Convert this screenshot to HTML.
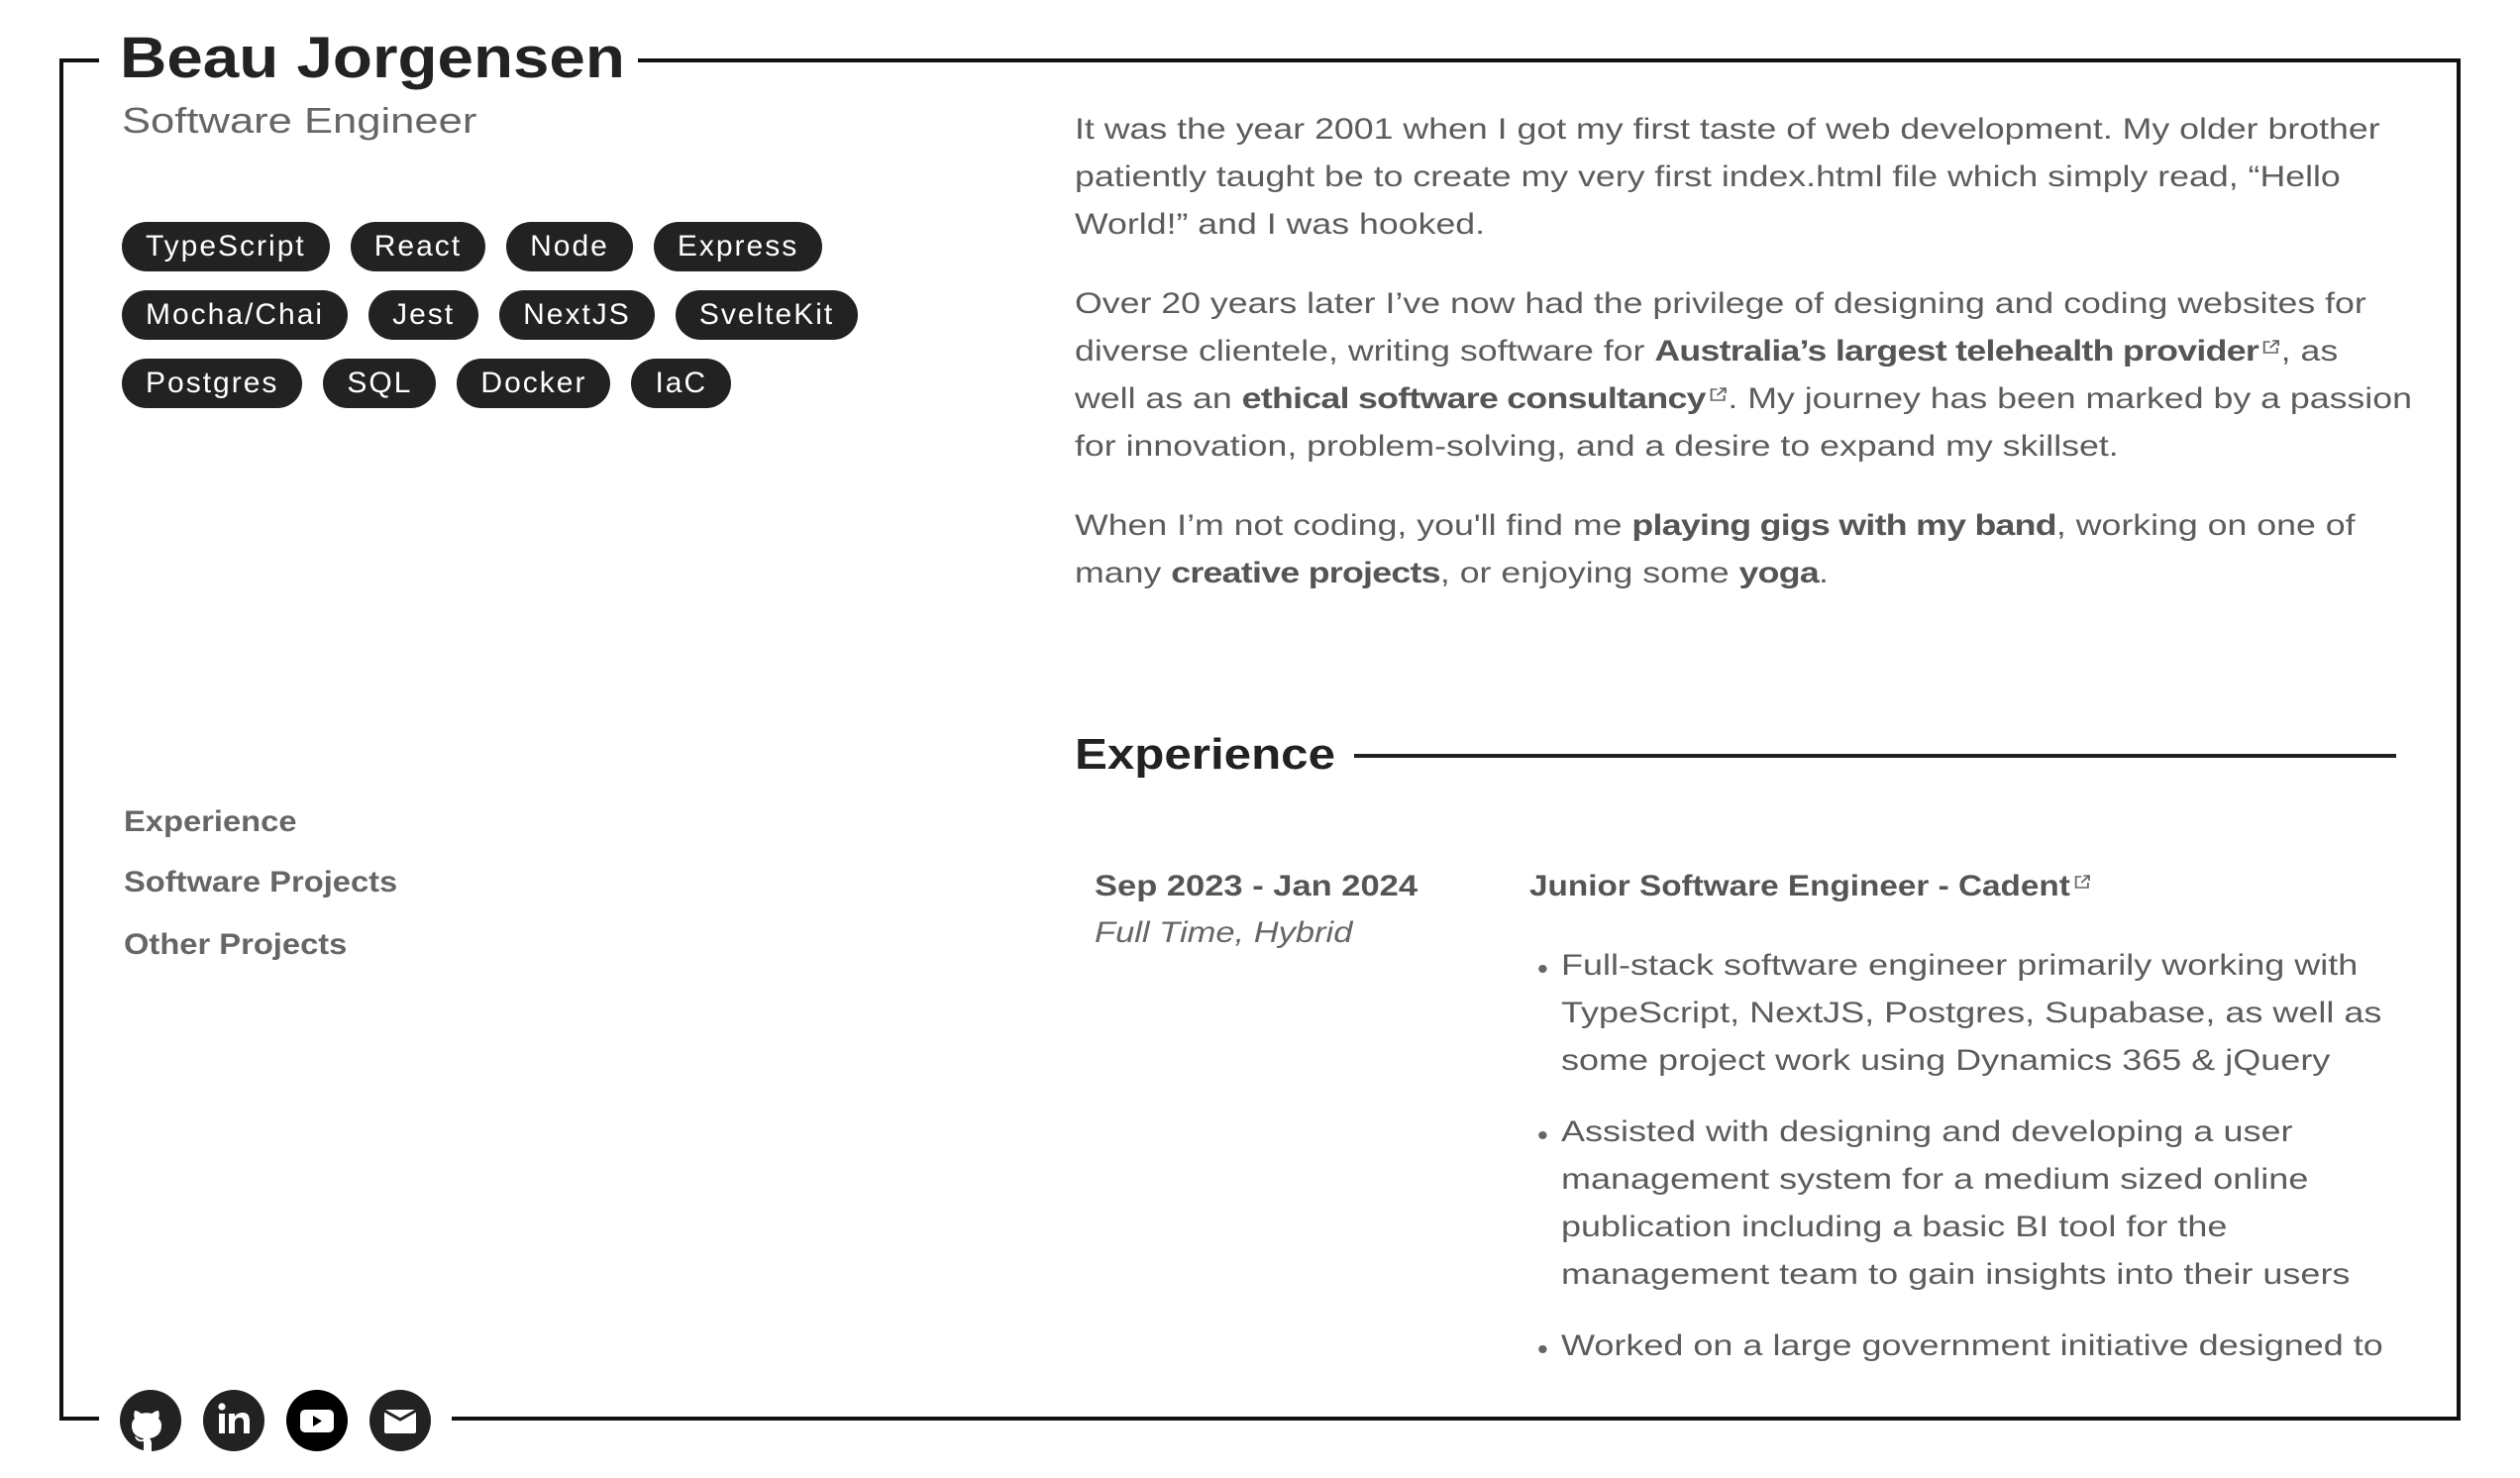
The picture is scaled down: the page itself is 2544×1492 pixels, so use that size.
<!DOCTYPE html>
<html><head><meta charset="utf-8"><style>
*{margin:0;padding:0;box-sizing:border-box}
body{width:2544px;height:1492px;background:#fff;position:relative;overflow:hidden;font-family:"Liberation Sans",sans-serif;color:#5c5c5c}
.ln{position:absolute;background:#111}
.abs{position:absolute;white-space:nowrap;transform-origin:0 0}
.tag{display:inline-block;height:50px;line-height:50px;padding:0 24px;border-radius:25px;background:#222;color:#fff;font-size:30px;margin-right:21px;letter-spacing:2px}
.row{position:absolute;left:123px;white-space:nowrap}
.p{position:absolute;left:1085px;font-size:30px;line-height:48px;white-space:nowrap;color:#5c5c5c;transform:scaleX(1.19);transform-origin:0 0}
b{color:#555;letter-spacing:-0.6px}
.ext{display:inline-block;width:16px;height:16px;vertical-align:6px;margin-left:3px}
.nav{position:absolute;left:125px;font-size:30px;line-height:30px;font-weight:bold;color:#666;transform:scaleX(1.09);transform-origin:0 0;white-space:nowrap}
.bl{position:absolute;left:1576px;font-size:30px;line-height:48px;white-space:nowrap;transform:scaleX(1.2);transform-origin:0 0}
.bl:before{content:"";position:absolute;left:-19px;top:23px;width:7px;height:8px;border-radius:50%;background:#666}
.ic{position:absolute;top:1403px;width:62px;height:62px}
</style></head><body>
<div class="ln" style="left:60px;top:59px;width:40px;height:4px"></div>
<div class="ln" style="left:644px;top:59px;width:1840px;height:4px"></div>
<div class="ln" style="left:60px;top:59px;width:4px;height:1375px"></div>
<div class="ln" style="left:2480px;top:59px;width:4px;height:1375px"></div>
<div class="ln" style="left:60px;top:1430px;width:40px;height:4px"></div>
<div class="ln" style="left:456px;top:1430px;width:2028px;height:4px"></div>

<div class="abs" style="left:121px;top:30px;font-size:58px;line-height:58px;font-weight:bold;color:#222;transform:scaleX(1.13)">Beau Jorgensen</div>
<div class="abs" style="left:123px;top:104px;font-size:36px;line-height:36px;color:#666;transform:scaleX(1.21)">Software Engineer</div>

<div class="row" style="top:224px"><span class="tag">TypeScript</span><span class="tag">React</span><span class="tag">Node</span><span class="tag">Express</span></div>
<div class="row" style="top:293px"><span class="tag">Mocha/Chai</span><span class="tag">Jest</span><span class="tag">NextJS</span><span class="tag">SvelteKit</span></div>
<div class="row" style="top:362px"><span class="tag">Postgres</span><span class="tag">SQL</span><span class="tag">Docker</span><span class="tag">IaC</span></div>

<div class="nav" style="top:815px">Experience</div>
<div class="nav" style="top:876px">Software Projects</div>
<div class="nav" style="top:939px">Other Projects</div>

<div class="p" style="top:107px">It was the year 2001 when I got my first taste of web development. My older brother<br>patiently taught be to create my very first index.html file which simply read, “Hello<br>World!” and I was hooked.</div>
<div class="p" style="top:283px">Over 20 years later I’ve now had the privilege of designing and coding websites for<br>diverse clientele, writing software for <b>Australia’s largest telehealth provider</b><svg class="ext" viewBox="0 0 16 16"><path d="M7 3H2v11h11V9M9 2h5v5M14 2L7 9" fill="none" stroke="#666" stroke-width="1.6"/></svg>, as<br>well as an <b>ethical software consultancy</b><svg class="ext" viewBox="0 0 16 16"><path d="M7 3H2v11h11V9M9 2h5v5M14 2L7 9" fill="none" stroke="#666" stroke-width="1.6"/></svg>. My journey has been marked by a passion<br>for innovation, problem-solving, and a desire to expand my skillset.</div>
<div class="p" style="top:507px">When I’m not coding, you'll find me <b>playing gigs with my band</b>, working on one of<br>many <b>creative projects</b>, or enjoying some <b>yoga</b>.</div>

<div class="abs" style="left:1085px;top:740px;font-size:44px;line-height:44px;font-weight:bold;color:#222;transform:scaleX(1.12)">Experience</div>
<div class="ln" style="left:1367px;top:761px;width:1052px;height:4px;background:#222"></div>

<div class="abs" style="left:1105px;top:871px;font-size:30px;line-height:48px;font-weight:bold;color:#555;transform:scaleX(1.15)">Sep 2023 - Jan 2024</div>
<div class="abs" style="left:1105px;top:918px;font-size:30px;line-height:48px;font-style:italic;color:#666;transform:scaleX(1.15)">Full Time, Hybrid</div>
<div class="abs" style="left:1544px;top:871px;font-size:30px;line-height:48px;font-weight:bold;color:#555;transform:scaleX(1.11)">Junior Software Engineer - Cadent<svg class="ext" viewBox="0 0 16 16"><path d="M7 3H2v11h11V9M9 2h5v5M14 2L7 9" fill="none" stroke="#666" stroke-width="1.6"/></svg></div>

<div class="bl" style="top:951px">Full-stack software engineer primarily working with<br>TypeScript, NextJS, Postgres, Supabase, as well as<br>some project work using Dynamics 365 &amp; jQuery</div>
<div class="bl" style="top:1119px">Assisted with designing and developing a user<br>management system for a medium sized online<br>publication including a basic BI tool for the<br>management team to gain insights into their users</div>
<div class="bl" style="top:1335px">Worked on a large government initiative designed to</div>

<svg class="ic" style="left:121px" viewBox="0 0 62 62"><circle cx="31" cy="31" r="31" fill="#222"/><path d="M24 62V52c-6 1-8-2-9-5 2 0 3 2 5 3 2 1 4 0 4-1-7-1-12-5-12-13 0-3 1-5 3-7-1-2-1-5 0-8 3 0 5 2 7 3 3-1 7-1 10 0 2-1 4-3 7-3 1 3 1 6 0 8 2 2 3 4 3 7 0 8-5 12-12 13 1 1 2 3 2 5v11z" fill="#fff"/></svg>
<svg class="ic" style="left:205px" viewBox="0 0 62 62"><circle cx="31" cy="31" r="31" fill="#222"/><rect x="16" y="24" width="6" height="20" fill="#fff"/><circle cx="19" cy="17" r="3.6" fill="#fff"/><path d="M26 24h6v3c2-3 5-4 8-4 5 0 7 3 7 9v12h-6V33c0-3-1-5-4-5s-5 2-5 5v11h-6z" fill="#fff"/></svg>
<svg class="ic" style="left:289px" viewBox="0 0 62 62"><circle cx="31" cy="31" r="31" fill="#000"/><rect x="14" y="20" width="34" height="23" rx="5" fill="#fff"/><path d="M27 26v11l9-5.5z" fill="#000"/></svg>
<svg class="ic" style="left:373px" viewBox="0 0 62 62"><circle cx="31" cy="31" r="31" fill="#222"/><rect x="15" y="20" width="32" height="24" rx="2" fill="#fff"/><path d="M15 21l16 9 16-9" fill="none" stroke="#222" stroke-width="3"/></svg>
</body></html>
